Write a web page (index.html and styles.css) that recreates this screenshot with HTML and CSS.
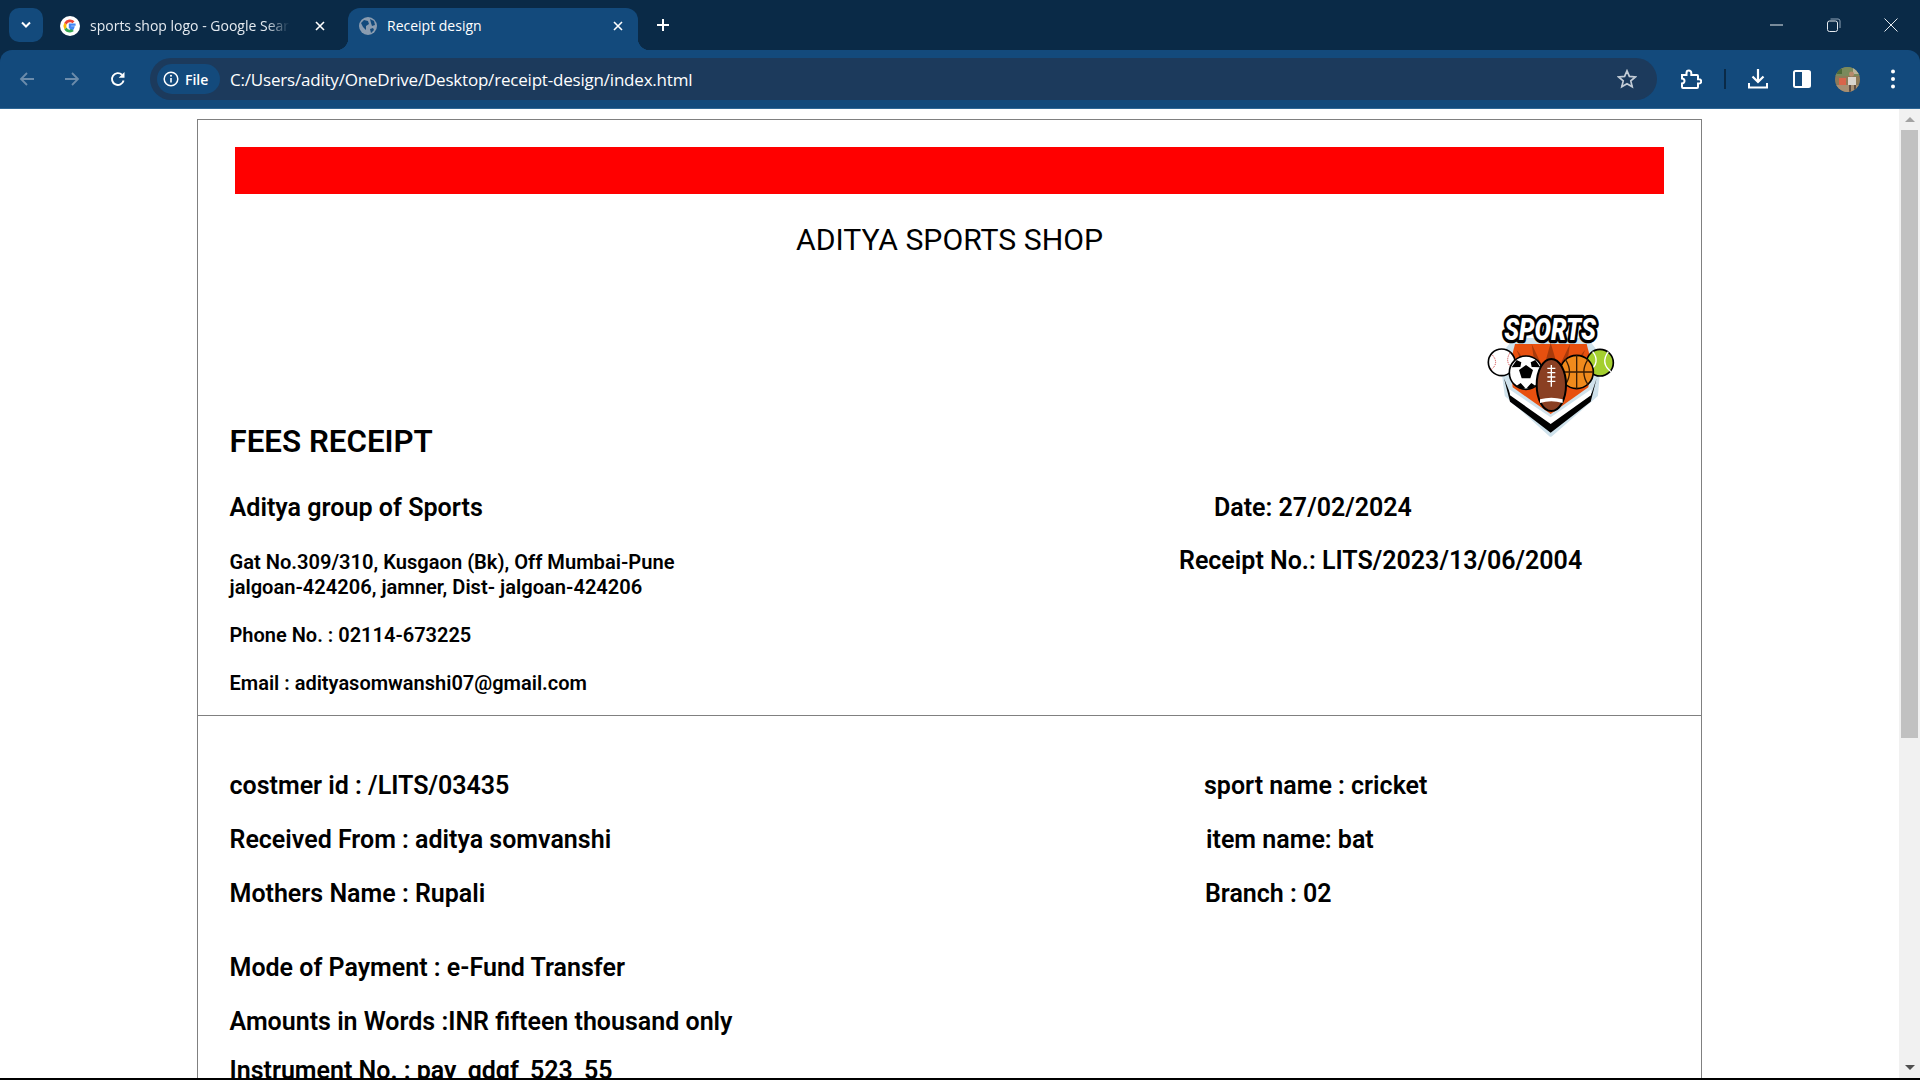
FILE: index.html
```html
<!DOCTYPE html>
<html lang="en">
<head>
<meta charset="utf-8">
<title>Receipt design</title>
<link rel="stylesheet" href="styles.css">
</head>
<body>
<header class="tabstrip">
  <button class="tabsearch"><svg width="12" height="8" viewBox="0 0 12 8"><path d="M2 1.5l4 4 4-4" fill="none" stroke="#fff" stroke-width="2"/></svg></button>
  <div class="tab tab-inactive">
    <svg class="favicon" width="20" height="20" viewBox="0 0 20 20"><circle cx="10" cy="10" r="10" fill="#fff"/><path d="M15.6 8.6H10v2.8h3.2c-.4 1.4-1.6 2.3-3.2 2.3" fill="none" stroke="#4285f4" stroke-width="2.4"/><path d="M10 13.7a3.7 3.7 0 0 1-3.4-2.3l-2.3 1.8A6.4 6.4 0 0 0 10 16.5a6 6 0 0 0 3.9-1.4l-2.1-1.8c-.5.2-1.100.4-1.800.4z" fill="#34a853"/><path d="M6.600 11.400a3.800 3.800 0 0 1 0-2.800L4.300 6.800a6.500 6.500 0 0 0 0 6.400z" fill="#fbbc05"/><path d="M10 6.300c1 0 1.800.3 2.500 1l2-2A6.500 6.500 0 0 0 4.300 6.800l2.300 1.800A3.700 3.700 0 0 1 10 6.300z" fill="#ea4335"/></svg>
    <span class="tabtitle tabtitle-fade">sports shop logo - Google Search</span>
    <svg class="tabclose" width="10" height="10" viewBox="0 0 10 10"><path d="M1 1l8 8M9 1L1 9" stroke="#fff" stroke-width="1.600"/></svg>
  </div>
  <div class="tab tab-active">
    <svg class="favicon" width="18" height="18" viewBox="0 0 18 18"><circle cx="9" cy="9" r="9" fill="#8a9cb0"/><path d="M2 6l3-3 4 1 1 3-3 2v4L4 10zM11 2l4 2 1 4-3 1-1-3zM11 12l3-1 1 2-3 3z" fill="#134a7c"/></svg>
    <span class="tabtitle">Receipt design</span>
    <svg class="tabclose" width="10" height="10" viewBox="0 0 10 10"><path d="M1 1l8 8M9 1L1 9" stroke="#fff" stroke-width="1.600"/></svg>
  </div>
  <svg class="newtab" width="14" height="14" viewBox="0 0 14 14"><path d="M7 1v12M1 7h12" stroke="#fff" stroke-width="2"/></svg>
  <div class="winctrls">
    <svg width="14" height="14" viewBox="0 0 14 14"><path d="M0 7h13" stroke="#e6ebf0" stroke-width="1"/></svg>
    <svg width="14" height="14" viewBox="0 0 14 14"><rect x=".5" y="3" width="10" height="10.500" rx="2" fill="none" stroke="#e6ebf0"/><path d="M3.500 1h7.500a2 2 0 0 1 2 2v7" fill="none" stroke="#8fa3b8"/></svg>
    <svg width="14" height="14" viewBox="0 0 14 14"><path d="M.5.500l13 13M13.500.500l-13 13" stroke="#e6ebf0"/></svg>
  </div>
</header>

<nav class="toolbar">
  <svg class="navicon nav-back" width="16" height="16" viewBox="0 0 16 16"><path d="M15 8H2M8 2L2 8l6 6" fill="none" stroke="#6c8cab" stroke-width="1.800"/></svg>
  <svg class="navicon nav-forward" width="16" height="16" viewBox="0 0 16 16"><path d="M1 8h13M8 2l6 6-6 6" fill="none" stroke="#6c8cab" stroke-width="1.800"/></svg>
  <svg class="navicon nav-reload" width="16" height="16" viewBox="0 0 16 16"><path d="M13.600 9.500A5.900 5.900 0 1 1 12 3.800" fill="none" stroke="#fff" stroke-width="1.900"/><path d="M14.500 1v5.800H8.700z" fill="#fff"/></svg>
  <div class="omnibox">
    <div class="chip">
      <svg width="16" height="16" viewBox="0 0 16 16"><circle cx="8" cy="8" r="6.800" fill="none" stroke="#fff" stroke-width="1.500"/><path d="M8 7v4.500" stroke="#fff" stroke-width="1.600"/><circle cx="8" cy="4.800" r="1" fill="#fff"/></svg>
      <span>File</span>
    </div>
    <span class="url">C:/Users/adity/OneDrive/Desktop/receipt-design/index.html</span>
    <svg class="star" width="20" height="20" viewBox="0 0 20 20"><path d="M10 1.800l2.400 5.600 6 .500-4.600 4 1.400 5.900-5.200-3.100-5.200 3.100 1.400-5.900-4.600-4 6-.500z" fill="none" stroke="#c3ccd6" stroke-width="1.700"/></svg>
  </div>
  <svg class="tool tool-ext" width="22" height="22" viewBox="0 0 22 22"><path d="M2 7h4.500V5a2.400 2.400 0 0 1 4.800 0v2h5.700a1 1 0 0 1 1 1v3.200h1a2.200 2.200 0 0 1 0 4.400h-1V19a1 1 0 0 1-1 1H3a1 1 0 0 1-1-1v-3.500a2.500 2.500 0 0 0 0-5z" fill="none" stroke="#fff" stroke-width="2"/></svg>
  <span class="toolsep"></span>
  <svg class="tool tool-dl" width="22" height="22" viewBox="0 0 22 22"><path d="M11 1v13M5.500 8.500L11 14l5.500-5.500" fill="none" stroke="#fff" stroke-width="2.200"/><path d="M2 15v4.500h18V15" fill="none" stroke="#fff" stroke-width="2"/></svg>
  <svg class="tool tool-side" width="18" height="18" viewBox="0 0 18 18"><rect x="1" y="1" width="16" height="16" rx="1.500" fill="#134a7c" stroke="#fff" stroke-width="2"/><rect x="9" y="1" width="8" height="16" fill="#fff"/></svg>
  <svg class="tool tool-avatar" width="25" height="25" viewBox="0 0 25 25"><defs><clipPath id="av"><circle cx="12.500" cy="12.500" r="12.500"/></clipPath></defs><g clip-path="url(#av)"><rect width="25" height="25" fill="#8d7a58"/><rect width="25" height="9" fill="#7a8a5c"/><rect x="2" y="2" width="5" height="5" fill="#4f6b3a"/><rect x="18" y="1" width="6" height="6" fill="#b9b39a"/><rect y="18" width="25" height="7" fill="#a78f72"/><rect x="4" y="11" width="7" height="7" fill="#d8644a"/><rect x="13" y="10" width="8" height="8" fill="#d9d4cc"/><circle cx="16.500" cy="7" r="2.500" fill="#b58a6c"/><rect x="14" y="18" width="2" height="7" fill="#5e4d42"/><rect x="19" y="18" width="2" height="7" fill="#5e4d42"/></g></svg>
  <svg class="tool tool-menu" width="6" height="20" viewBox="0 0 6 20"><circle cx="3" cy="2.500" r="2" fill="#fff"/><circle cx="3" cy="10" r="2" fill="#fff"/><circle cx="3" cy="17.500" r="2" fill="#fff"/></svg>
</nav>

<div class="viewport">
  <main class="page">
    <section class="receipt">
      <div class="redbar"></div>
      <h1 class="shop">ADITYA SPORTS SHOP</h1>
      <div class="logo-row">
        <svg class="logo" width="180" height="140" viewBox="0 0 540 420" role="img" aria-label="Sports logo">
          <path d="M125 170 L165 120 L380 120 L418 170 L408 285 L272 404 L140 285Z" fill="#cfe2ec" stroke="#cfe2ec" stroke-width="12" stroke-linejoin="round"/>
          <path d="M132 235 L150 305 L272 398 L392 305 L410 235 L395 280 L272 368 L150 280Z" fill="#000"/>
          <path d="M148 268 L272 352 L394 268 L393 286 L272 372 L150 286Z" fill="#fff"/>
          <path d="M165 132 L380 132 L395 190 L385 262 L272 342 L158 262 L150 190Z" fill="#e8500f"/>
          <path d="M272 128 L255 190 L290 190Z M215 132 L245 195 L225 200Z M330 132 L300 195 L320 200Z M170 150 L215 205 L195 215Z M375 150 L330 205 L350 215Z" fill="#a83a0b"/>
          <text class="logo-word" x="270" y="120" text-anchor="middle" textLength="275" lengthAdjust="spacingAndGlyphs">SPORTS</text>
          <text class="logo-word-fill" x="270" y="120" text-anchor="middle" textLength="275" lengthAdjust="spacingAndGlyphs">SPORTS</text>
          <circle cx="125" cy="187" r="40" fill="#fff" stroke="#000" stroke-width="5"/>
          <path d="M97 165 q22 25 -5 45 M150 158 q-18 30 10 48" fill="none" stroke="#c33" stroke-width="3" stroke-dasharray="3 3"/>
          <circle cx="420" cy="188" r="40" fill="#a4cf2f" stroke="#000" stroke-width="5"/>
          <path d="M398 155 q25 32 -10 58 M445 155 q-25 35 8 60" fill="none" stroke="#fff" stroke-width="4"/>
          <circle cx="350" cy="216" r="50" fill="#f08a1c" stroke="#000" stroke-width="5"/>
          <path d="M300 216h100M350 166v100M316 178q25 38 0 76M384 178q-25 38 0 76" fill="none" stroke="#3a1d05" stroke-width="4"/>
          <circle cx="198" cy="218" r="50" fill="#fff" stroke="#000" stroke-width="5"/>
          <path d="M198 195l21 15-8 25h-26l-8-25zM155 202l15-22 14 7-3 14zM241 202l-15-22-14 7 3 14zM170 257l12-8 13 14-9 5zM226 257l-12-8-13 14 9 5z" fill="#000"/>
          <ellipse cx="274" cy="255" rx="44" ry="78" fill="#8a3f22" stroke="#000" stroke-width="6"/>
          <path d="M274 195v65M262 205h24M262 218h24M262 231h24M262 244h24" stroke="#fff" stroke-width="4" fill="none"/>
          <path d="M240 298q34 -10 68 0v11q-34 -10 -68 0z" fill="#fff"/>
        </svg>
      </div>
      <h2 class="fees">FEES RECEIPT</h2>
      <div class="org">
        <div class="org-left">
          <h3 class="org-name">Aditya group of Sports</h3>
          <p class="addr">Gat No.309/310, Kusgaon (Bk), Off Mumbai-Pune<br>jalgoan-424206, jamner, Dist- jalgoan-424206</p>
          <p class="contact contact-phone">Phone No. : 02114-673225</p>
          <p class="contact contact-email">Email : adityasomwanshi07@gmail.com</p>
        </div>
        <div class="org-right">
          <h3 class="meta meta-date">Date: 27/02/2024</h3>
          <h3 class="meta meta-no">Receipt No.: LITS/2023/13/06/2004</h3>
        </div>
      </div>
      <hr class="rule">
      <div class="details">
        <div class="row"><span class="cell-left">costmer id : /LITS/03435</span><span class="cell-right r1">sport name : cricket</span></div>
        <div class="row"><span class="cell-left">Received From : aditya somvanshi</span><span class="cell-right r2">item name: bat</span></div>
        <div class="row"><span class="cell-left">Mothers Name : Rupali</span><span class="cell-right r3">Branch : 02</span></div>
        <div class="row row-gap"><span class="cell-left">Mode of Payment : e-Fund Transfer</span></div>
        <div class="row"><span class="cell-left">Amounts in Words :INR fifteen thousand only</span></div>
        <div class="row row-last"><span class="cell-left">Instrument No. : pay_qdqf_523_55</span></div>
      </div>
    </section>
  </main>
  <aside class="scrollbar">
    <span class="arrow arrow-up"></span>
    <span class="thumb"></span>
    <span class="arrow arrow-down"></span>
  </aside>
</div>
<div class="taskedge"></div>
</body>
</html>
```
FILE: styles.css
```css
* { box-sizing: border-box; }
html, body { margin: 0; height: 100%; overflow: hidden; }
body {
  display: flex;
  flex-direction: column;
  height: 1080px;
  background: #0a2a47;
  font-family: Roboto, "Liberation Sans", sans-serif;
  color: #000;
}

/* browser chrome */
.tabstrip {
  height: 50px;
  flex: none;
  display: flex;
  align-items: flex-end;
  background: #0a2a47;
  padding-left: 9px;
  color: #fff;
  font-family: "Open Sans", "Noto Sans", sans-serif;
}
.tabsearch {
  width: 34px;
  height: 34px;
  margin-bottom: 8px;
  border: 0;
  padding: 0;
  border-radius: 10px;
  background: #134a7c;
  display: flex;
  align-items: center;
  justify-content: center;
}
.tab {
  height: 42px;
  display: flex;
  align-items: center;
  font-size: 14px;
  padding-bottom: 7px;
}
.tab-inactive { width: 305px; padding-left: 17px; }
.tab-active {
  width: 290px;
  padding-left: 11px;
  background: #134a7c;
  border-radius: 12px 12px 0 0;
  position: relative;
}
.tab-active::before, .tab-active::after {
  content: "";
  position: absolute;
  bottom: 0;
  width: 12px;
  height: 12px;
}
.tab-active::before { left: -12px; background: radial-gradient(circle at 0 0, transparent 12px, #134a7c 12.5px); }
.tab-active::after { right: -12px; background: radial-gradient(circle at 100% 0, transparent 12px, #134a7c 12.5px); }
.favicon { flex: none; }
.tabtitle { white-space: nowrap; overflow: hidden; margin-left: 10px; width: 210px; }
.tab-inactive .tabtitle { width: 210px; color: #e4eaf0; }
.tabtitle-fade { -webkit-mask-image: linear-gradient(to right, #000 84%, transparent 95%); mask-image: linear-gradient(to right, #000 84%, transparent 95%); }
.tabclose { flex: none; margin-left: 15px; }
.tab-active .tabclose { margin-left: 16px; }
.newtab { margin: 0 0 18px 18px; }
.winctrls {
  margin-left: auto;
  height: 50px;
  display: flex;
  align-items: center;
  gap: 43px;
  padding: 0 22px 0 0;
}
.toolbar {
  height: 59px;
  flex: none;
  display: flex;
  align-items: center;
  background: #134a7c;
  border-bottom: 1px solid #2f6795;
  border-radius: 12px 12px 0 0;
  padding-left: 19px;
}
.navicon { flex: none; }
.nav-forward { margin-left: 29px; }
.nav-reload { margin-left: 30px; }
.omnibox {
  width: 1507px;
  height: 42px;
  margin-left: 24px;
  border-radius: 21px;
  background: #1c3a5c;
  display: flex;
  align-items: center;
  padding: 0 20px 0 7px;
  color: #fff;
  font-family: "Open Sans", "Noto Sans", sans-serif;
}
.chip {
  width: 63px;
  height: 30px;
  border-radius: 15px;
  background: #134a7c;
  display: flex;
  align-items: center;
  gap: 6px;
  padding-left: 6px;
  font-size: 14px;
  font-weight: 600;
  flex: none;
}
.url { margin-left: 10px; font-size: 17px; white-space: nowrap; flex: 1; letter-spacing: -.2px; }
.star { flex: none; }
.tool { flex: none; }
.tool-ext { margin-left: 23px; }
.toolsep { width: 2px; height: 20px; background: #0a2a47; margin-left: 22px; flex: none; }
.tool-dl { margin-left: 21px; }
.tool-side { margin-left: 24px; }
.tool-avatar { margin-left: 24px; }
.tool-menu { margin-left: 30px; }

/* page */
.viewport { flex: 1; min-height: 0; display: flex; overflow: hidden; background: #fff; }
.page { flex: 1; min-width: 0; overflow: hidden; padding: 10px 197px 0 197px; }
.receipt {
  border: 1px solid #808080;
  height: 1200px;
  padding-top: 27px;
}
.redbar { height: 47px; margin: 0 37px; background: #f00; }
.shop {
  margin: 29px 0 0 0;
  text-align: center;
  font-size: 30.200px;
  line-height: 34px;
  font-weight: 450;
}
.logo-row { display: flex; justify-content: flex-end; height: 140px; margin-top: 43px; padding-right: 61px; }
.logo { display: block; flex: none; }
.logo-word, .logo-word-fill {
  font-family: Roboto, sans-serif;
  font-weight: 900;
  font-style: italic;
  font-size: 92px;
}
.logo-word { fill: #000; stroke: #000; stroke-width: 20px; stroke-linejoin: round; }
.logo-word-fill { fill: #fff; }
.fees { margin: -15px 0 0 31.500px; font-size: 31.300px; line-height: 34px; font-weight: 600; }
.org { display: flex; margin-top: 34px; height: 222px; }
.org-left { width: 948px; padding-left: 31.500px; }
.org-name { margin: 0; font-size: 25.100px; line-height: 30px; font-weight: 600; }
.addr { margin: 27px 0 0; font-size: 20.100px; line-height: 25px; font-weight: 600; }
.contact { margin: 23px 0 0; font-size: 20px; line-height: 25px; font-weight: 600; }
.meta { margin: 0; font-size: 25px; line-height: 30px; font-weight: 600; white-space: nowrap; }
.meta-date { margin-left: 68px; }
.meta-no { margin: 23px 0 0 33px; }
.rule { margin: 0; border: 0; border-top: 1px solid #808080; }
.details { padding: 55px 0 0 31.500px; }
.row { display: flex; font-size: 25px; line-height: 30px; font-weight: 600; margin-bottom: 24px; white-space: nowrap; }
.row-gap { margin-top: 44px; }
.row-last { margin-top: -5px; }
.cell-left { width: 916.500px; flex: none; }
.cell-right.r1 { margin-left: 58px; }
.cell-right.r2 { margin-left: 60px; }
.cell-right.r3 { margin-left: 59px; }

/* scrollbar */
.scrollbar {
  width: 21px;
  flex: none;
  background: #f1f1f1;
  display: flex;
  flex-direction: column;
  align-items: center;
  padding-top: 8px;
}
.arrow { width: 0; height: 0; border-left: 5px solid transparent; border-right: 5px solid transparent; flex: none; }
.arrow-up { border-bottom: 5px solid #a3a3a3; }
.arrow-down { border-top: 5px solid #505050; margin-top: auto; margin-bottom: 8px; }
.thumb { width: 17px; height: 608px; margin-top: 8px; background: #c1c1c1; flex: none; }
.taskedge { height: 2px; flex: none; background: #000; }
```
